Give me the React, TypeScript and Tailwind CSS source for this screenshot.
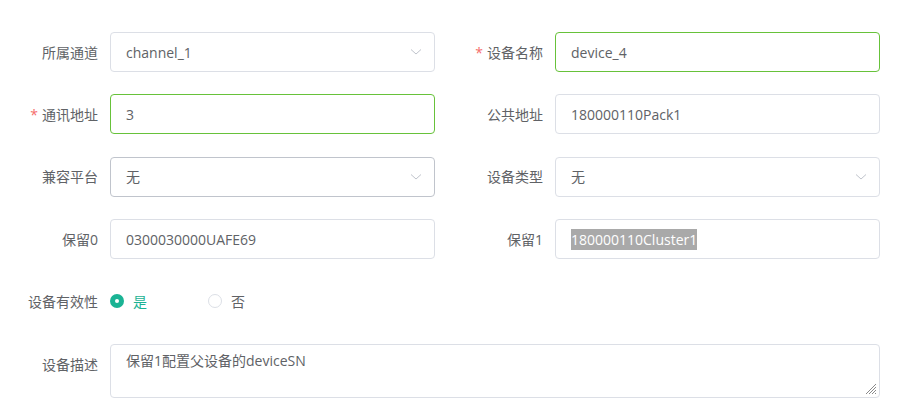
import React from "react";

const FONT = { fontFamily: '"Open Sans", "Noto Sans CJK SC", sans-serif' };

function Label({ text, required }: { text: string; required?: boolean }) {
  return (
    <div className="w-[110px] shrink-0 pr-[12px] h-[40px] flex items-center justify-end text-[14px] text-[#606266]">
      {required && <span className="text-[#f56c6c] mr-[4px]">*</span>}
      {text}
    </div>
  );
}

function Chevron() {
  return (
    <svg width="12" height="8" viewBox="0 0 12 8" className="absolute right-[12px] top-1/2 -translate-y-1/2">
      <polyline points="1,1.5 6,6 11,1.5" fill="none" stroke="#c0c4cc" strokeWidth="1" />
    </svg>
  );
}

function Box({
  children,
  border = "border-[#dcdfe6]",
  select,
}: {
  children: React.ReactNode;
  border?: string;
  select?: boolean;
}) {
  return (
    <div
      className={`relative w-[325px] h-[40px] border ${border} rounded-[4px] bg-white px-[15px] flex items-center text-[14px] text-[#606266]`}
    >
      {children}
      {select && <Chevron />}
    </div>
  );
}

function Item({ label, required, children }: { label: string; required?: boolean; children: React.ReactNode }) {
  return (
    <div className="flex items-start">
      <Label text={label} required={required} />
      {children}
    </div>
  );
}

export default function App() {
  return (
    <div className="w-[900px] h-[409px] bg-white pt-[32px] overflow-hidden" style={FONT}>
      <div className="grid grid-cols-[445px_445px] gap-y-[22.4px]">
        <Item label="所属通道">
          <Box select>channel_1</Box>
        </Item>
        <Item label="设备名称" required>
          <Box border="border-[#67c23a]">device_4</Box>
        </Item>
        <Item label="通讯地址" required>
          <Box border="border-[#67c23a]">3</Box>
        </Item>
        <Item label="公共地址">
          <Box>180000110Pack1</Box>
        </Item>
        <Item label="兼容平台">
          <Box select border="border-[#c0c4cc]">无</Box>
        </Item>
        <Item label="设备类型">
          <Box select>无</Box>
        </Item>
        <Item label="保留0">
          <Box>0300030000UAFE69</Box>
        </Item>
        <Item label="保留1">
          <Box>
            <span className="bg-[#a9a9a9] text-white">180000110Cluster1</span>
          </Box>
        </Item>
      </div>

      <div className="mt-[22px] flex items-center h-[40px]">
        <Label text="设备有效性" />
        <div className="flex items-center">
          <span className="w-[14px] h-[14px] rounded-full bg-[#1ab394] flex items-center justify-center">
            <span className="w-[4px] h-[4px] rounded-full bg-white" />
          </span>
          <span className="ml-[9px] text-[14px] text-[#1ab394]">是</span>
        </div>
        <div className="flex items-center ml-[61px]">
          <span className="w-[14px] h-[14px] rounded-full border border-[#dcdfe6] bg-white" />
          <span className="ml-[9px] text-[14px] text-[#606266]">否</span>
        </div>
      </div>

      <div className="mt-[23px] flex items-start">
        <Label text="设备描述" />
        <div className="relative w-[770px] h-[54px] border border-[#dcdfe6] rounded-[4px] bg-white px-[15px] pt-[5px] text-[14px] leading-[21px] text-[#606266]">
          保留1配置父设备的deviceSN
          <svg width="12" height="12" viewBox="0 0 12 12" className="absolute right-[2px] bottom-[2px]">
            <line x1="1" y1="11" x2="11" y2="1" stroke="#8a8a8a" strokeWidth="1" />
            <line x1="4" y1="11" x2="11" y2="4" stroke="#8a8a8a" strokeWidth="1" />
            <line x1="7" y1="11" x2="11" y2="7" stroke="#8a8a8a" strokeWidth="1" />
            <line x1="10" y1="11" x2="11" y2="10" stroke="#8a8a8a" strokeWidth="1" />
          </svg>
        </div>
      </div>
    </div>
  );
}
